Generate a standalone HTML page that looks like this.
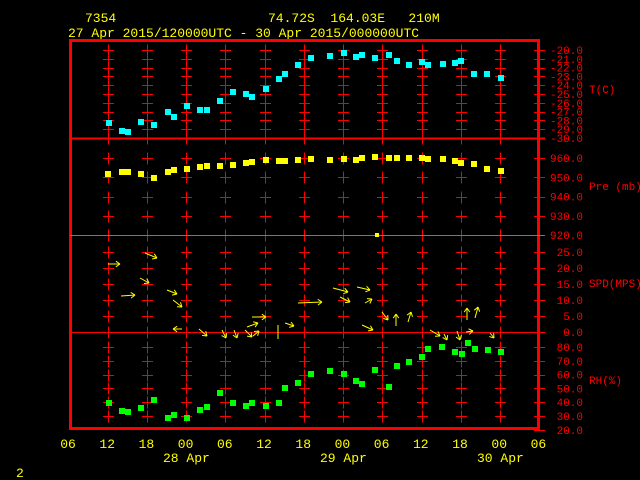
<!DOCTYPE html>
<html><head><style>
html,body{margin:0;padding:0;background:#000;width:640px;height:480px;overflow:hidden}
svg{display:block}
.y{fill:#ffff00;font-family:"Liberation Mono",monospace;font-size:13px}
.r{fill:#ff0000;font-family:"Liberation Mono",monospace;font-size:11px}
</style></head><body>
<svg width="640" height="480" viewBox="0 0 640 480" xmlns="http://www.w3.org/2000/svg">
<text class="y" x="85" y="22">7354</text>
<text class="y" x="268" y="22" xml:space="preserve">74.72S  164.03E   210M</text>
<text class="y" x="68" y="37">27 Apr 2015/120000UTC - 30 Apr 2015/000000UTC</text>
<g id="grid" stroke="#ff0000" stroke-width="1" fill="none"></g>
<rect x="70.5" y="40.5" width="468" height="388" fill="none" stroke="#ff0000" stroke-width="3"/>
<line x1="70" y1="138.5" x2="545" y2="138.5" stroke="#ff0000" stroke-width="2"/>
<line x1="70" y1="235.5" x2="545" y2="235.5" stroke="#777" stroke-width="1"/>
<line x1="70" y1="332.5" x2="545" y2="332.5" stroke="#ff0000" stroke-width="1"/>
<g id="rl"></g>
<text class="r" x="589" y="93">T(C)</text>
<text class="r" x="589" y="190">Pre (mb)</text>
<text class="r" x="589" y="287">SPD(MPS)</text>
<text class="r" x="589" y="384">RH(%)</text>
<g id="xl"></g>
<text class="y" x="163" y="462">28 Apr</text>
<text class="y" x="320" y="462">29 Apr</text>
<text class="y" x="477" y="462">30 Apr</text>
<text class="y" x="16" y="477">2</text>
<g id="pts"></g>
<g stroke="#ffff00" stroke-width="1" fill="none" id="wind"></g>
</svg>
<script>
var ns="http://www.w3.org/2000/svg";
function el(p,t,a,txt){var e=document.createElementNS(ns,t);for(var k in a)e.setAttribute(k,a[k]);if(txt!=null)e.textContent=txt;document.getElementById(p).appendChild(e);}
var xs=[108,147,186,225,265,304,343,382,422,461,500];
var ticks=[];
for(var i=0;i<=10;i++)ticks.push({y:50+i*8.8,l:(i==0?"-20.0":"-"+(20+i)+".0")});
var pv=[960,950,940,930,920];for(i=0;i<5;i++)ticks.push({y:158+i*19.3,l:pv[i]+".0"});
var sv=[25,20,15,10,5,0];for(i=0;i<6;i++)ticks.push({y:252+i*16,l:sv[i].toFixed(1)});
var rv=[80,70,60,50,40,30,20];for(i=0;i<7;i++)ticks.push({y:347+i*13.8,l:rv[i]+".0"});
ticks.forEach(function(t){
 var y=Math.round(t.y)+0.5;
 if(t.y<425&&t.y>45) xs.forEach(function(x){
  el("grid","line",{x1:x-5,y1:y,x2:x+6,y2:y});
  el("grid","line",{x1:x+0.5,y1:y-6,x2:x+0.5,y2:y+6});
 });
 el("grid","line",{x1:534,y1:y,x2:545,y2:y});
 el("rl","text",{class:"r",x:583,y:t.y+4,"text-anchor":"end"},t.l);
});
var xl=["06","12","18","00","06","12","18","00","06","12","18","00","06"];
for(i=0;i<13;i++)el("xl","text",{class:"y",x:68+i*39.2,y:448,"text-anchor":"middle"},xl[i]);
var T=[[109,123],[122,131],[128,132],[141,122],[154,125],[168,112],[174,117],[187,106],[200,110],[207,110],[220,101],[233,92],[246,94],[252,97],[266,89],[279,79],[285,74],[298,65],[311,58],[330,56],[344,53],[356,57],[362,55],[375,58],[389,55],[397,61],[409,65],[422,62],[428,65],[443,64],[455,63],[461,61],[474,74],[487,74],[501,78]];
var P=[[108,174],[122,172],[128,172],[141,174],[154,178],[168,172],[174,170],[187,169],[200,167],[207,166],[220,166],[233,165],[246,163],[252,162],[266,160],[279,161],[285,161],[298,160],[311,159],[330,160],[344,159],[356,160],[362,158],[375,157],[389,158],[397,158],[409,158],[422,158],[428,159],[443,159],[455,161],[461,163],[474,164],[487,169],[501,171]];
var R=[[109,403],[122,411],[128,412],[141,408],[154,400],[168,418],[174,415],[187,418],[200,410],[207,407],[220,393],[233,403],[246,406],[252,403],[266,406],[279,403],[285,388],[298,383],[311,374],[330,371],[344,374],[356,381],[362,384],[375,370],[389,387],[397,366],[409,362],[422,357],[428,349],[442,347],[455,352],[462,354],[468,343],[475,349],[488,350],[501,352]];
T.forEach(function(p){el("pts","rect",{x:p[0]-3,y:p[1]-3,width:6,height:6,fill:"#00ffff"})});
P.forEach(function(p){el("pts","rect",{x:p[0]-3,y:p[1]-3,width:6,height:6,fill:"#ffff00"})});
el("pts","rect",{x:375,y:233,width:4,height:4,fill:"#ffff00"});
R.forEach(function(p){el("pts","rect",{x:p[0]-3,y:p[1]-3,width:6,height:6,fill:"#00ff00"})});
var W=[[108,264,120,264],[121,296,135,295],[145,253,157,258],[140,278,149,283],[167,290,177,294],[173,300,182,307],[182,329,173,329],[199,329,207,336],[222,330,226,338],[234,330,237,338],[245,330,252,337],[247,327,258,323],[253,336,259,331],[252,317,266,317],[285,323,294,326],[298,303,322,302],[333,288,348,292],[340,297,350,302],[357,287,370,290],[365,303,372,299],[362,325,373,330],[382,312,388,320],[396,326,396,314],[408,322,411,312],[430,330,440,336],[444,334,447,340],[457,331,460,340],[466,332,473,331],[467,320,467,308],[475,318,478,307],[490,333,494,338]];
W.forEach(function(w){
 el("wind","line",{x1:w[0],y1:w[1],x2:w[2],y2:w[3]});
 var a=Math.atan2(w[3]-w[1],w[2]-w[0]);
 for(var s=-1;s<=1;s+=2){var b=a+Math.PI+s*0.6;el("wind","line",{x1:w[2],y1:w[3],x2:w[2]+5*Math.cos(b),y2:w[3]+5*Math.sin(b)});}
});
el("wind","line",{x1:278,y1:325,x2:278,y2:339});
</script>
</body></html>
